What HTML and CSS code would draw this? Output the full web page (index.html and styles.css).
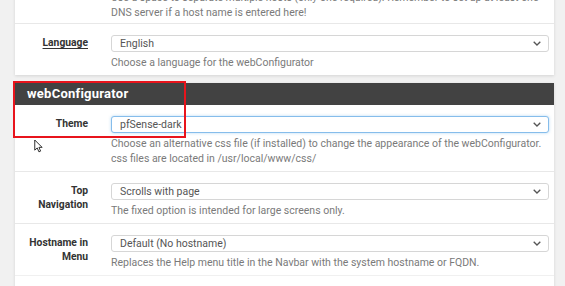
FILE: index.html
```html
<!DOCTYPE html>
<html>
<head>
<meta charset="utf-8">
<link rel="stylesheet" href="styles.css">
</head>
<body>
<div class="page">
  <div class="panel panel-top">
    <div class="row row-first">
      <div class="label"></div>
      <div class="control">
        <div class="help">Use a space to separate multiple hosts (only one required). Remember to set up at least one<br>DNS server if a host name is entered here!</div>
      </div>
    </div>
    <div class="row">
      <div class="label"><span class="uline">Language</span></div>
      <div class="control">
        <div class="select"><span>English</span><svg class="chev" width="8" height="5" viewBox="0 0 8 5"><polyline points="0.7,0.7 4,4 7.3,0.7" fill="none" stroke="#555" stroke-width="1.3"/></svg></div>
        <div class="help">Choose a language for the webConfigurator</div>
      </div>
    </div>
  </div>

  <div class="panel panel-web">
    <div class="heading">webConfigurator</div>
    <div class="row row-nb">
      <div class="label">Theme</div>
      <div class="control">
        <div class="select focus"><span>pfSense-dark</span><svg class="chev" width="8" height="5" viewBox="0 0 8 5"><polyline points="0.7,0.7 4,4 7.3,0.7" fill="none" stroke="#555" stroke-width="1.3"/></svg></div>
        <div class="help">Choose an alternative css file (if installed) to change the appearance of the webConfigurator.<br>css files are located in /usr/local/www/css/</div>
      </div>
    </div>
    <div class="row">
      <div class="label">Top<br>Navigation</div>
      <div class="control">
        <div class="select"><span>Scrolls with page</span><svg class="chev" width="8" height="5" viewBox="0 0 8 5"><polyline points="0.7,0.7 4,4 7.3,0.7" fill="none" stroke="#555" stroke-width="1.3"/></svg></div>
        <div class="help">The fixed option is intended for large screens only.</div>
      </div>
    </div>
    <div class="row">
      <div class="label">Hostname in<br>Menu</div>
      <div class="control">
        <div class="select"><span>Default (No hostname)</span><svg class="chev" width="8" height="5" viewBox="0 0 8 5"><polyline points="0.7,0.7 4,4 7.3,0.7" fill="none" stroke="#555" stroke-width="1.3"/></svg></div>
        <div class="help">Replaces the Help menu title in the Navbar with the system hostname or FQDN.</div>
      </div>
    </div>
    <div class="row row-empty"></div>
    <div class="highlight"></div>
    <svg class="cursor" width="9" height="14" viewBox="0 0 12 18"><path d="M1 1 L1 14.5 L4.3 11.6 L6.6 16.8 L8.8 15.8 L6.6 10.8 L10.8 10.8 Z" fill="#fff" stroke="#1a1a1a" stroke-width="1.2" stroke-linejoin="round"/></svg>
  </div>
</div>
</body>
</html>
```
FILE: styles.css
```css
html, body {
  margin: 0;
  padding: 0;
}
body {
  background: #f1f1f1;
  font-family: Roboto, "Liberation Sans", sans-serif;
  font-size: 10.5px;
  color: #333;
  width: 565px;
  height: 286px;
  overflow: hidden;
}
.page {
  margin-top: -12px;
  padding: 0 11px 0 15px;
}
.panel {
  background: #fff;
  box-shadow: 0 1px 3px rgba(0,0,0,0.12);
  position: relative;
}
.panel-top {
  margin-bottom: 8px;
}
.row {
  display: grid;
  grid-template-columns: 73px 1fr;
  column-gap: 23px;
  padding: 11px 5px 5px 0;
  border-top: 1px solid #e8e8e8;
}
.row-first {
  border-top: none;
  padding-top: 2px;
  padding-bottom: 3px;
}
.row-nb {
  border-top: none;
}
.row-empty {
  height: 20px;
  padding: 0;
  border-top-color: #f0f0f0;
}
.label {
  text-align: right;
  font-weight: 700;
  font-size: 10.3px;
  line-height: 14px;
  padding-top: 1px;
  color: #333;
}
.uline {
  text-decoration: underline;
  text-underline-offset: 2px;
}
.control {
  min-width: 0;
}
.select {
  height: 17px;
  box-sizing: border-box;
  border: 1px solid #d6d6d6;
  border-radius: 3px;
  padding: 0 7px 0 8px;
  display: flex;
  align-items: center;
  justify-content: space-between;
  color: #555;
  font-size: 10.5px;
  background: #fff;
}
.select.focus {
  border-color: #86bdeb;
  box-shadow: 0 0 3px rgba(102,175,233,0.5);
}
.chev {
  flex: none;
}
.help {
  margin-top: 3px;
  line-height: 15px;
  color: #7a7a7a;
  white-space: nowrap;
}
.row-first .help {
  margin-top: 0;
}
.heading {
  background: #424242;
  color: #fff;
  font-weight: 700;
  font-size: 13px;
  letter-spacing: 0.25px;
  height: 22px;
  line-height: 22px;
  padding-left: 12px;
}
.highlight {
  position: absolute;
  left: -2px;
  top: -2px;
  width: 173px;
  height: 57px;
  box-sizing: border-box;
  border: 2px solid #e8141c;
}
.cursor {
  position: absolute;
  left: 19px;
  top: 56px;
}
```
